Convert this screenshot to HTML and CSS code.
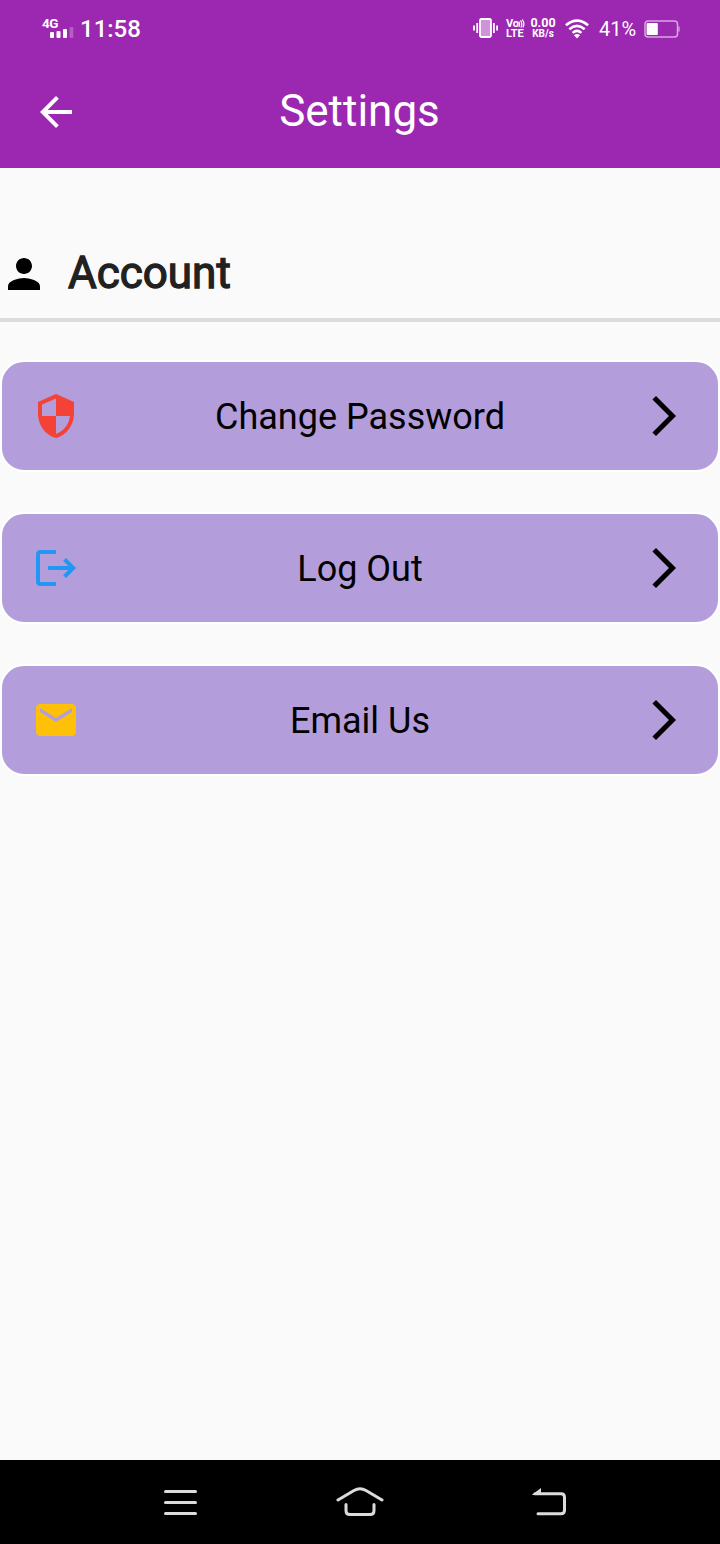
FILE: index.html
```html
<!DOCTYPE html>
<html lang="en">
<head>
<meta charset="utf-8">
<title>Settings</title>
<link rel="stylesheet" href="styles.css">
</head>
<body>
<header class="header">
  <div class="status">
    <div class="signal">
      <span class="network">4G</span>
      <svg class="bars" width="24" height="12" viewBox="0 0 24 12" fill="#fff"><rect x="0" y="6" width="4" height="6" rx="1"/><rect x="6.500" y="5" width="4" height="7" rx="1"/><rect x="13" y="3" width="4" height="9" rx="1"/><rect x="19.500" y="1" width="3.800" height="11" rx="1" opacity=".25"/></svg>
    </div>
    <span class="clock">11:58</span>
    <svg class="vibrate" width="26" height="22" viewBox="0 0 26 22" fill="none" stroke="#fff" stroke-width="1.800"><rect x="7" y="2" width="11" height="18" rx="1.500" fill="#fff" fill-opacity=".5"/><path d="M1 8.500v5M4.200 6v10M20.900 6v10M24.100 8.500v5"/></svg>
    <div class="stack volte">
      <span class="vo">Vo<svg class="waves" width="7" height="9" viewBox="0 0 7 9" fill="none" stroke="#fff" stroke-width="1.200"><path d="M.8 2.500Q2.500 5 .8 8M2.500 1.300Q5 5 2.800 8.500M4.300.5Q7.300 5 4.800 8.500"/></svg></span>
      <span class="lte">LTE</span>
    </div>
    <div class="stack speed"><span class="rate">0.00</span><span class="unit">KB/s</span></div>
    <svg class="wifi" width="24" height="20" viewBox="0 0 24 20" fill="none" stroke="#fff" stroke-width="2.600"><path d="M.9 6.300Q12-3.200 23.100 6.300M4.300 10.200Q12 3.500 19.700 10.200M7.600 13.900Q12 10 16.400 13.900"/><path d="M9 16.200Q12 13.900 15 16.200L12 19.500z" fill="#fff" stroke="none"/></svg>
    <span class="percent">41%</span>
    <svg class="battery" width="37" height="18" viewBox="0 0 37 18" fill="none"><rect x="1" y=".9" width="32.500" height="16.200" rx="3" stroke="#fff" stroke-opacity=".6" stroke-width="1.500"/><path d="M35 6.500v5" stroke="#fff" stroke-opacity=".6" stroke-width="1.200"/><rect x="2.600" y="3" width="11.200" height="12" rx="1" fill="#fff"/></svg>
  </div>
  <div class="appbar">
    <svg class="icon" viewBox="0 0 24 24"><path d="M20 11H7.830l5.590-5.590L12 4l-8 8 8 8 1.410-1.410L7.830 13H20v-2z"/></svg>
    <h1 class="title">Settings</h1>
  </div>
</header>
<main class="content">
  <div class="section">
    <svg class="icon" viewBox="0 0 24 24"><path d="M12 12c2.210 0 4-1.790 4-4s-1.790-4-4-4-4 1.790-4 4 1.790 4 4 4zm0 2c-2.670 0-8 1.340-8 4v2h16v-2c0-2.660-5.330-4-8-4z"/></svg>
    <h2 class="section-title">Account</h2>
  </div>
  <div class="list">
    <div class="card">
      <svg class="icon red" viewBox="0 0 24 24"><path fill-rule="evenodd" d="M12 1L3 5v6c0 5.550 3.840 10.740 9 12 5.160-1.260 9-6.450 9-12V5l-9-4zM12 12h7c-.53 4.120-3.280 7.790-7 8.940V12H5V6.300l7-3.110z"/></svg>
      <span class="label">Change Password</span>
      <svg class="icon" viewBox="0 0 24 24"><path d="M6.230 20.230L8 22l10-10L8 2 6.230 3.770 14.460 12z"/></svg>
    </div>
    <div class="card">
      <svg class="icon blue" viewBox="0 0 24 24"><path d="M17 7l-1.410 1.410L18.170 11H8v2h10.170l-2.580 2.580L17 17l5-5zM4 5h8V3H4c-1.100 0-2 .9-2 2v14c0 1.100.9 2 2 2h8v-2H4V5z"/></svg>
      <span class="label">Log Out</span>
      <svg class="icon" viewBox="0 0 24 24"><path d="M6.230 20.230L8 22l10-10L8 2 6.230 3.770 14.460 12z"/></svg>
    </div>
    <div class="card">
      <svg class="icon amber" viewBox="0 0 24 24"><path d="M20 4H4c-1.100 0-1.990.9-1.990 2L2 18c0 1.100.9 2 2 2h16c1.100 0 2-.9 2-2V6c0-1.100-.9-2-2-2zm0 4l-8 5-8-5V6l8 5 8-5v2z"/></svg>
      <span class="label">Email Us</span>
      <svg class="icon" viewBox="0 0 24 24"><path d="M6.230 20.230L8 22l10-10L8 2 6.230 3.770 14.460 12z"/></svg>
    </div>
  </div>
</main>
<nav class="navbar">
  <svg width="34" height="28" viewBox="0 0 34 28"><path d="M1.500 2.500h30M1.500 13.500h30M1.500 24.500h30"/></svg>
  <svg width="48" height="32" viewBox="0 0 48 32"><path d="M2 14L18 4.500Q24 1 30 4.500L46 14M10 18.500v6q0 4 4 4h20q4 0 4-4v-6"/></svg>
  <svg width="36" height="30" viewBox="0 0 36 30"><path d="M4 6.700h26q3.500 0 3.500 3.500v13q0 3.500-3.500 3.500H7"/><path class="tip" d="M1 7.800L10 1v7H1z"/></svg>
</nav>
</body>
</html>
```
FILE: styles.css
```css
* { box-sizing: border-box; }
body {
  margin: 0;
  height: 1544px;
  display: flex;
  flex-direction: column;
  background: #fafafa;
  color: #000;
  font-family: Roboto, sans-serif;
}
svg { display: block; flex: none; }
.header { height: 168px; background: #9c27b0; color: #fff; }
.status { display: flex; align-items: center; height: 56px; padding-left: 42px; }
.signal { width: 38px; height: 24px; display: flex; flex-direction: column; }
.network { font-size: 13.500px; line-height: 14px; font-weight: 700; letter-spacing: -.5px; }
.bars { margin: -4px 0 0 8px; }
.clock { width: 393px; font-size: 24px; font-weight: 500; line-height: 28px; margin-top: 2px; }
.vibrate { margin-right: 7px; }
.stack { display: flex; flex-direction: column; font-weight: 700; white-space: nowrap; }
.volte { width: 24px; padding-top: 1px; }
.vo { display: flex; height: 9px; font-size: 11px; line-height: 9px; letter-spacing: -.3px; }
.waves { margin-left: -1px; }
.lte { font-size: 11px; line-height: 11px; }
.speed { width: 26px; align-items: center; margin-right: 9px; }
.rate { font-size: 12.500px; line-height: 11px; }
.unit { font-size: 10px; line-height: 11px; }
.wifi { margin: 1px 10px 0 0; }
.percent { width: 45px; font-size: 20px; line-height: 24px; margin-top: 2px; }
.battery { margin-top: 2px; }
.appbar { height: 112px; padding: 0 32px; display: grid; grid-template-columns: 48px 1fr 48px; align-items: center; }
.icon { width: 48px; height: 48px; fill: currentColor; }
.title { margin: 0; font-size: 44px; font-weight: 400; line-height: 52px; text-align: center; padding: 0 1px 2px 0; }
.content { flex: 1; padding-top: 80px; }
.section { display: flex; align-items: center; height: 74px; gap: 20px; padding-bottom: 18px; border-bottom: 4px solid #dcdcdc; }
.section-title { margin: 0; padding-bottom: 2px; font-size: 44px; line-height: 52px; font-weight: 400; color: #212121; -webkit-text-stroke: 1.300px #212121; }
.list { display: flex; flex-direction: column; gap: 40px; padding-top: 38px; }
.card {
  height: 112px;
  padding: 0 30px;
  display: grid;
  grid-template-columns: 48px 1fr 48px;
  align-items: center;
  border: 2px solid #fff;
  border-radius: 24px;
  background: #b39ddb;
}
.label { padding-top: 2px; font-size: 36px; line-height: 42px; text-align: center; }
.red { color: #f44336; }
.blue { color: #2196f3; }
.amber { color: #ffc107; }
.navbar { height: 84px; background: #000; display: grid; grid-template-columns: 172px 195px 36px; align-items: center; padding-left: 164px; }
.navbar svg:first-child { margin-top: 2px; }
.navbar path { fill: none; stroke: #dcdcdc; stroke-width: 3; stroke-linecap: round; }
.navbar .tip { fill: #dcdcdc; stroke: none; }
```
